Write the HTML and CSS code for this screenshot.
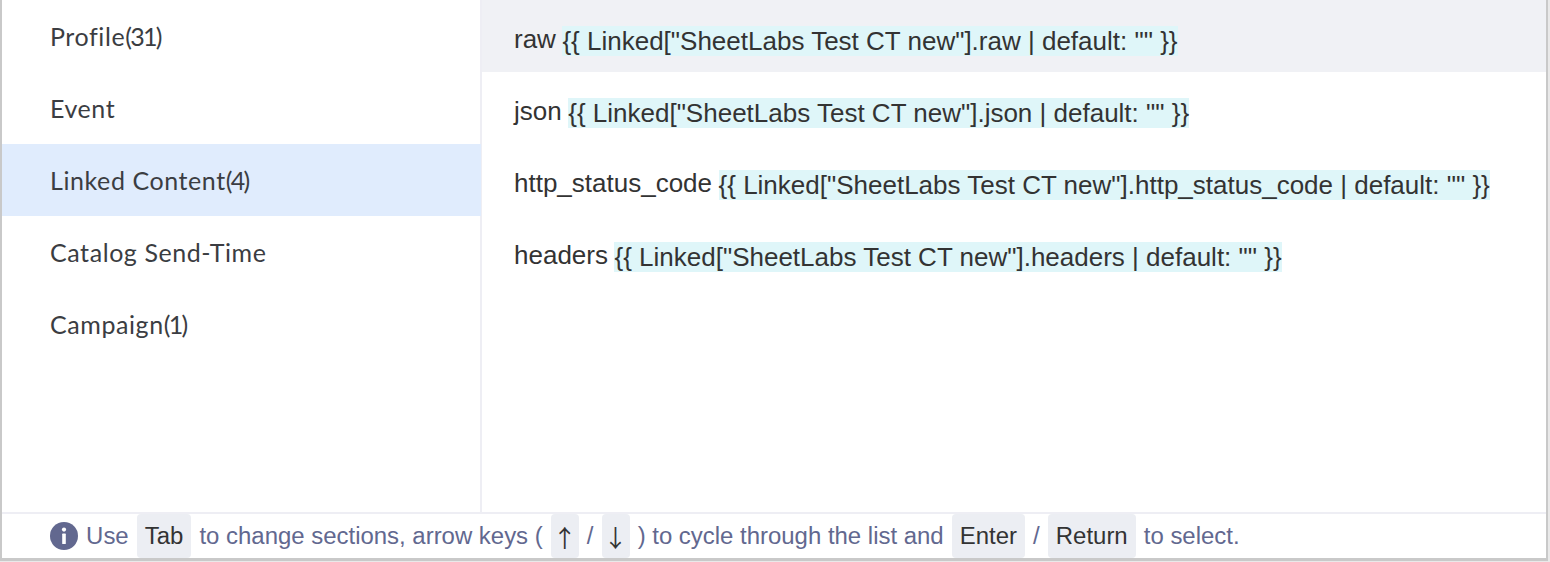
FILE: index.html
```html
<!DOCTYPE html>
<html lang="en">
<head>
<meta charset="utf-8">
<title>Personalization</title>
<link rel="stylesheet" href="styles.css">
</head>
<body>
<div class="panel">
  <div class="main">
    <ul class="sections">
      <li class="section"><span>Profile<span class="count">(31)</span></span></li>
      <li class="section">Event</li>
      <li class="section active"><span>Linked Content<span class="count">(4)</span></span></li>
      <li class="section">Catalog Send-Time</li>
      <li class="section"><span>Campaign<span class="count">(1)</span></span></li>
    </ul>
    <ul class="items">
      <li class="item hover"><span class="name">raw</span> <span class="tag">{{ Linked["SheetLabs Test CT new"].raw | default: "" }}</span></li>
      <li class="item"><span class="name">json</span> <span class="tag">{{ Linked["SheetLabs Test CT new"].json | default: "" }}</span></li>
      <li class="item"><span class="name">http_status_code</span> <span class="tag">{{ Linked["SheetLabs Test CT new"].http_status_code | default: "" }}</span></li>
      <li class="item"><span class="name">headers</span> <span class="tag">{{ Linked["SheetLabs Test CT new"].headers | default: "" }}</span></li>
    </ul>
  </div>
  <div class="hint">
    <svg class="info" viewBox="0 0 28 28" aria-hidden="true">
      <circle cx="14" cy="14" r="14" fill="#62688f"/>
      <circle cx="14" cy="7.6" r="2.1" fill="#fff"/>
      <rect x="12.2" y="11.6" width="3.6" height="10.4" rx="0.6" fill="#fff"/>
    </svg>
    <span>Use</span>
    <kbd class="key">Tab</kbd>
    <span>to change sections, arrow keys (</span>
    <kbd class="key arrow">↑</kbd>
    <span>/</span>
    <kbd class="key arrow">↓</kbd>
    <span>) to cycle through the list and</span>
    <kbd class="key">Enter</kbd>
    <span>/</span>
    <kbd class="key">Return</kbd>
    <span>to select.</span>
  </div>
</div>
</body>
</html>
```
FILE: styles.css
```css
* { box-sizing: border-box; }
html, body { margin: 0; padding: 0; height: 100%; background: #e9e9e9; overflow: hidden; }
.panel {
  width: 1548px;
  height: 561px;
  background: #fff;
  border-left: 2px solid #c9c9c9;
  border-right: 2px solid #c9c9c9;
  border-bottom: 3px solid #c9c9c9;
  display: flex;
  flex-direction: column;
}
.main { flex: 1; display: flex; min-height: 0; }
.sections, .items { list-style: none; margin: 0; padding: 0; }
.sections { width: 480px; flex: none; border-right: 2px solid #eeeef4; }
.section {
  height: 72px;
  padding-left: 48px;
  display: flex;
  align-items: center;
  font: 25px "Lato", sans-serif;
  letter-spacing: 0.58px;
  color: #3b3d42;
}
.count { letter-spacing: -1.7px; }
.section.active { background: #e0ecfd; margin-right: -1px; }
.items { flex: 1; }
.item {
  height: 72px;
  padding-left: 32px;
  padding-top: 7px;
  display: flex;
  align-items: center;
  gap: 6.5px;
  font: 26px "Liberation Sans", sans-serif;
  color: #333;
}
.item.hover { background: #f0f1f5; }
.tag { background: #dff6f9; line-height: 30px; position: relative; top: 1px; }
.hint {
  height: 46px;
  flex: none;
  border-top: 2px solid #eeeef4;
  padding-left: 48px;
  display: flex;
  align-items: center;
  font: 23.95px "Liberation Sans", sans-serif;
  color: #62688f;
  gap: 8.1px;
}
.info { width: 28px; height: 28px; flex: none; }
.key {
  font: inherit;
  color: #333;
  background: #eceef3;
  border-radius: 4px;
  height: 44px;
  padding: 0 8px;
  display: flex;
  align-items: center;
}
.arrow { padding: 0 2px; font-family: "Noto Sans CJK SC", sans-serif; }
```
